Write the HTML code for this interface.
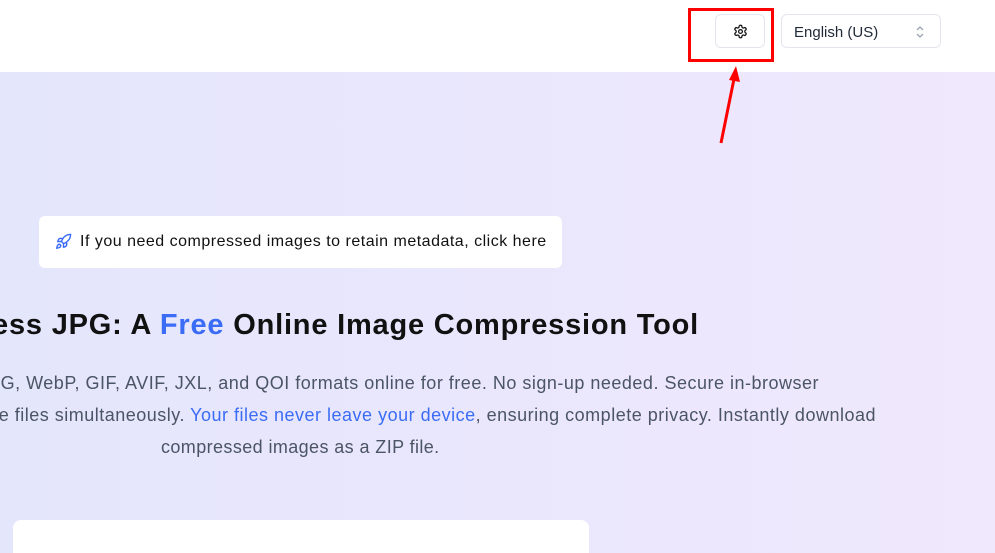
<!DOCTYPE html>
<html><head><meta charset="utf-8"><style>
html,body{margin:0;width:995px;height:553px;overflow:hidden}
body{font-family:"Liberation Sans",sans-serif;position:relative;background:#fff}
.hdr{position:absolute;left:0;top:0;width:995px;height:72px;background:#fff}
.main{position:absolute;left:0;top:72px;width:995px;height:481px;background:linear-gradient(90deg,#e4e6fc,#ebe7fd 60%,#f0e8fd)}
.btn{position:absolute;top:14px;height:34px;border:1px solid #e3e6ec;border-radius:6px;background:#fff;box-sizing:border-box}
.t{position:absolute;white-space:nowrap}
.p{font-size:18px;letter-spacing:0.5px;color:#4b5563}
</style></head><body>
<div class="hdr"></div>
<div class="main"></div>
<div class="btn" style="left:715px;width:50px"><svg style="position:absolute;left:17px;top:9px" width="15" height="15" viewBox="0 0 24 24" fill="none" stroke="#111" stroke-width="2"><path d="M12.22 2h-.44a2 2 0 0 0-2 2v.18a2 2 0 0 1-1 1.73l-.43.25a2 2 0 0 1-2 0l-.15-.08a2 2 0 0 0-2.730.73l-.22.38a2 2 0 0 0 .73 2.73l.15.1a2 2 0 0 1 1 1.72v.51a2 2 0 0 1-1 1.74l-.15.09a2 2 0 0 0-.73 2.730l.22.38a2 2 0 0 0 2.73.73l.15-.08a2 2 0 0 1 2 0l.43.25a2 2 0 0 1 1 1.73V20a2 2 0 0 0 2 2h.44a2 2 0 0 0 2-2v-.18a2 2 0 0 1 1-1.73l.43-.25a2 2 0 0 1 2 0l.15.08a2 2 0 0 0 2.73-.73l.22-.39a2 2 0 0 0-.73-2.73l-.15-.08a2 2 0 0 1-1-1.74v-.5a2 2 0 0 1 1-1.74l.15-.09a2 2 0 0 0 .73-2.73l-.22-.38a2 2 0 0 0-2.73-.73l-.15.08a2 2 0 0 1-2 0l-.43-.25a2 2 0 0 1-1-1.73V4a2 2 0 0 0-2-2z"/><circle cx="12" cy="12" r="3"/></svg></div>
<div class="btn" style="left:781px;width:160px"><span class="t" style="left:12px;top:9px;font-size:15px;color:#1f2937">English (US)</span><svg style="position:absolute;left:133px;top:10px" width="10" height="14" viewBox="0 0 10 14" fill="none" stroke="#9ca3af" stroke-width="1.3"><path d="M2 5l3-3 3 3M2 9l3 3 3-3"/></svg></div>
<div style="position:absolute;left:688px;top:8px;width:86px;height:54px;border:3px solid #f00;box-sizing:border-box"></div>
<svg style="position:absolute;left:710px;top:60px" width="40" height="90"><path d="M11 83L25 14" stroke="#f00" stroke-width="3"/><path d="M19 20L26 6L30 22Z" fill="#f00"/></svg>
<div style="position:absolute;left:39px;top:216px;width:523px;height:52px;background:#fff;border-radius:6px"></div>
<svg style="position:absolute;left:55px;top:233px" width="17" height="17" viewBox="0 0 24 24" fill="none" stroke="#3b6cf6" stroke-width="2"><path d="M4.5 16.5c-1.5 1.26-2 5-2 5s3.74-.5 5-2c.71-.84.7-2.13-.09-2.91a2.18 2.18 0 0 0-2.910-.09z"/><path d="m12 15-3-3a22 22 0 0 1 2-3.95A12.88 12.88 0 0 1 22 2c0 2.72-.78 7.5-6 11a22.35 22.35 0 0 1-4 2z"/><path d="M9 12H4s.55-3.03 2-4c1.62-1.08 5 0 5 0M12 15v5s3.03-.55 4-2c1.08-1.62 0-5 0-5"/></svg>
<span class="t" style="left:80px;top:233px;font-size:16px;letter-spacing:0.5px;color:#111">If you need compressed images to retain metadata, click here</span>
<span class="t" style="right:296px;top:309px;font-size:29px;letter-spacing:0.8px;font-weight:bold;color:#111">Compress JPG: A <span style="color:#3b6cf6">Free</span> Online Image Compression Tool</span>
<span class="t p" style="right:176px;top:373px">Compress PNG, JPG, WebP, GIF, AVIF, JXL, and QOI formats online for free. No sign-up needed. Secure in-browser</span>
<span class="t p" style="right:119px;top:405px">processing of multiple files simultaneously. <span style="color:#3b6cf6">Your files never leave your device</span>, ensuring complete privacy. Instantly download</span>
<span class="t p" style="left:161px;top:437px;letter-spacing:0.4px">compressed images as a ZIP file.</span>
<div style="position:absolute;left:13px;top:520px;width:576px;height:33px;background:#fff;border-radius:8px 8px 0 0"></div>
</body></html>
